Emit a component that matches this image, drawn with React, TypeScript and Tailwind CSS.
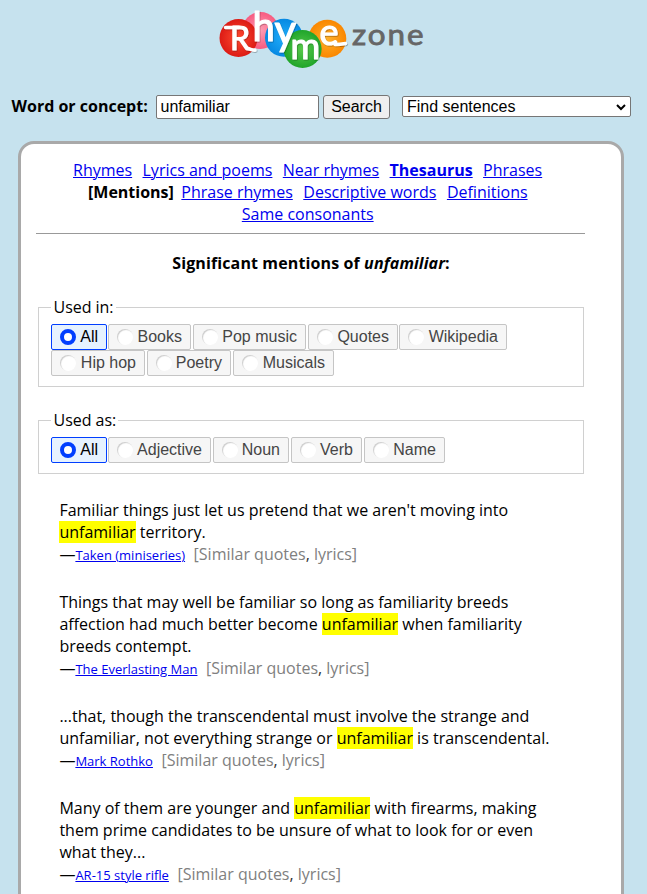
import type { ReactNode } from "react";

const link = "text-[#0000ee] underline decoration-1";

function Logo() {
  return (
    <svg width="225" height="75" viewBox="0 0 225 75" role="img" aria-label="RhymeZone">
      <defs>
        <radialGradient id="red"><stop offset="0" stopColor="#ff4a30" /><stop offset="1" stopColor="#dc1b15" /></radialGradient>
        <radialGradient id="pink"><stop offset="0" stopColor="#ff9db4" /><stop offset="1" stopColor="#f75b80" /></radialGradient>
        <radialGradient id="blue"><stop offset="0" stopColor="#20adfa" /><stop offset="1" stopColor="#0789e2" /></radialGradient>
        <radialGradient id="green"><stop offset="0" stopColor="#58c94a" /><stop offset="1" stopColor="#20a52b" /></radialGradient>
        <radialGradient id="orange"><stop offset="0" stopColor="#ffb02a" /><stop offset="1" stopColor="#fa8700" /></radialGradient>
        <filter id="shade" x="-20%" y="-20%" width="140%" height="150%">
          <feDropShadow dx="0.6" dy="0.8" stdDeviation="0.6" floodColor="#000" floodOpacity="0.35" />
        </filter>
      </defs>
      <circle cx="50.5" cy="30.5" r="18.5" fill="url(#pink)" />
      <circle cx="74" cy="37.8" r="19" fill="url(#blue)" />
      <circle cx="28.5" cy="38" r="19" fill="url(#red)" />
      <circle cx="117.3" cy="38.8" r="19" fill="url(#orange)" />
      <circle cx="92.6" cy="49" r="19" fill="url(#green)" />
      <g filter="url(#shade)" fill="#fff" stroke="#fff" strokeLinejoin="round">
        <text fontFamily="Lato, sans-serif" strokeWidth="1.2">
          <tspan x="20" y="49.5" fontSize="32">R</tspan>
          <tspan x="42.5" y="40.5" fontSize="40">h</tspan>
          <tspan x="64.5" y="44.5" fontSize="42">y</tspan>
          <tspan x="80.5" y="58.5" fontSize="36">m</tspan>
          <tspan x="109.5" y="45" fontSize="36">e</tspan>
        </text>
        <path d="M15.5 27.5H29M38.5 48.5Q41 50 45 50.2M125 44.5Q130 44.5 135.5 43.5" fill="none" strokeWidth="3.4" strokeLinecap="round" />
      </g>
      <text transform="translate(142 45) scale(1.1 1)" fontFamily="Lato, sans-serif" fontSize="28.5" fill="#666" stroke="#666" strokeWidth=".8" textLength="65">zone</text>
    </svg>
  );
}

function Choice({ label, width, on = false }: { label: string; width: string; on?: boolean }) {
  return (
    <label className={`flex h-[26px] shrink-0 items-center justify-between rounded-[2px] border pr-2 pl-2 font-['Liberation_Sans',sans-serif] text-[16px] leading-none ${on ? "border-[#003eff] bg-[#e6f2ff] text-black" : "border-[#c5c5c5] bg-[#f6f6f6] text-[#454545]"} ${width}`}>
      <span className={`size-4 rounded-full bg-white ${on ? "border-[4px] border-[#003eff]" : "shadow-[inset_1px_1px_1px_#ccc]"}`} />
      <span>{label}</span>
    </label>
  );
}

function Group({ title, className, children }: { title: string; className: string; children: ReactNode }) {
  return (
    <fieldset className={`ml-0.5 w-[546px] border border-[#d0d0d0] pl-3 ${className}`}>
      <legend className="h-[22px] pr-[2px] pl-[2.5px] tracking-[-0.03px]">{title}</legend>
      {children}
    </fieldset>
  );
}

function Quote({ lines, source }: { lines: ReactNode[]; source: string }) {
  return (
    <article className="whitespace-nowrap">
      {lines.map((l, i) => <p key={i} className="h-[22px]">{l}</p>)}
      <p className="h-[22px]">
        —<a className={`text-[13px] ${link}`}>{source}</a>
        <span className="ml-[8.5px] text-[#808080]">[Similar quotes<span className="text-[#333]">,</span> lyrics]</span>
      </p>
    </article>
  );
}

const Mark = () => <mark className="bg-[#ffff00] text-black">unfamiliar</mark>;

export default function App() {
  return (
    <main className="h-[894px] w-[647px] overflow-hidden bg-[#c6e2ee] font-['Open_Sans',sans-serif] text-[16px] leading-[22px] text-black">
      <header className="h-[95px] pl-[210px]"><Logo /></header>
      <form className="flex h-[46px] items-start pl-[11.5px]">
        <label className="w-[144.5px] font-bold whitespace-nowrap">Word or concept:</label>
        <input defaultValue="unfamiliar" className="h-6 w-[163px] rounded-[2px] border border-[#767676] bg-white pr-1 pb-px pl-[3.5px] font-['Liberation_Sans',sans-serif]" />
        <button type="button" className="ml-1 h-6 w-[67px] rounded-[3px] border border-[#767676] bg-[#efefef] font-['Liberation_Sans',sans-serif] leading-[20px]">Search</button>
        <div className="mt-px ml-3 flex h-[21px] w-[229px] items-center justify-between rounded-[2px] border border-[#767676] bg-white pr-1 pl-[4px] font-['Liberation_Sans',sans-serif]">
          <span>Find sentences</span>
          <svg width="10" height="8" viewBox="0 0 10 8"><path d="M1 2L5 6L9 2" fill="none" stroke="#000" strokeWidth="2" /></svg>
        </div>
      </form>
      <section className="ml-[18px] h-[780px] w-[606px] rounded-t-[16px] border-[3px] border-[#a9a9a9] bg-white pt-[15px] pl-[15px]">
        <nav className="flex w-[549.4px] flex-col border-b border-[#999] pb-[8px] whitespace-nowrap">
          <div className="flex h-[22px] gap-[10.4px] pl-[37px]">
            <a className={link}>Rhymes</a><a className={link}>Lyrics and poems</a><a className={link}>Near rhymes</a><a className={`font-bold ${link}`}>Thesaurus</a><a className={link}>Phrases</a>
          </div>
          <div className="flex h-[22px] gap-[10.5px] pl-[52px]">
            <b className="-mr-[3px]">[Mentions]</b><a className={link}>Phrase rhymes</a><a className={link}>Descriptive words</a><a className={link}>Definitions</a>
          </div>
          <div className="flex h-[22px] pl-[205.8px]"><a className={link}>Same consonants</a></div>
        </nav>
        <h1 className="mt-[18px] h-[22px] w-[550px] text-center font-bold tracking-[0.12px]">Significant mentions of <i>unfamiliar</i>:</h1>
        <Group title="Used in:" className="mt-[22px] h-[91px]">
          <div className="mt-[6px] flex gap-[2px]">
            <Choice label="All" width="w-[56px] -mr-px" on />
            <Choice label="Books" width="w-[83px]" />
            <Choice label="Pop music" width="w-[113px]" />
            <Choice label="Quotes" width="w-[90px] -mr-px" />
            <Choice label="Wikipedia" width="w-[108px]" />
          </div>
          <div className="flex gap-[2px]">
            <Choice label="Hip hop" width="w-[94px]" />
            <Choice label="Poetry" width="w-[84px]" />
            <Choice label="Musicals" width="w-[101px]" />
          </div>
        </Group>
        <Group title="Used as:" className="mt-[22px] h-[65px]">
          <div className="mt-[6px] flex gap-[2px]">
            <Choice label="All" width="w-[56px] -mr-px" on />
            <Choice label="Adjective" width="w-[103px]" />
            <Choice label="Noun" width="w-[76px]" />
            <Choice label="Verb" width="w-[71px]" />
            <Choice label="Name" width="w-[81px]" />
          </div>
        </Group>
        <div className="mt-[25px] flex flex-col gap-[26px] pl-[23.4px]">
          <Quote lines={["Familiar things just let us pretend that we aren't moving into", <><Mark /> territory.</>]} source="Taken (miniseries)" />
          <Quote lines={["Things that may well be familiar so long as familiarity breeds", <>affection had much better become <Mark /> when familiarity</>, "breeds contempt."]} source="The Everlasting Man" />
          <Quote lines={["...that, though the transcendental must involve the strange and", <>unfamiliar, not everything strange or <Mark /> is transcendental.</>]} source="Mark Rothko" />
          <Quote lines={[<>Many of them are younger and <Mark /> with firearms, making</>, "them prime candidates to be unsure of what to look for or even", "what they..."]} source="AR-15 style rifle" />
        </div>
      </section>
    </main>
  );
}
